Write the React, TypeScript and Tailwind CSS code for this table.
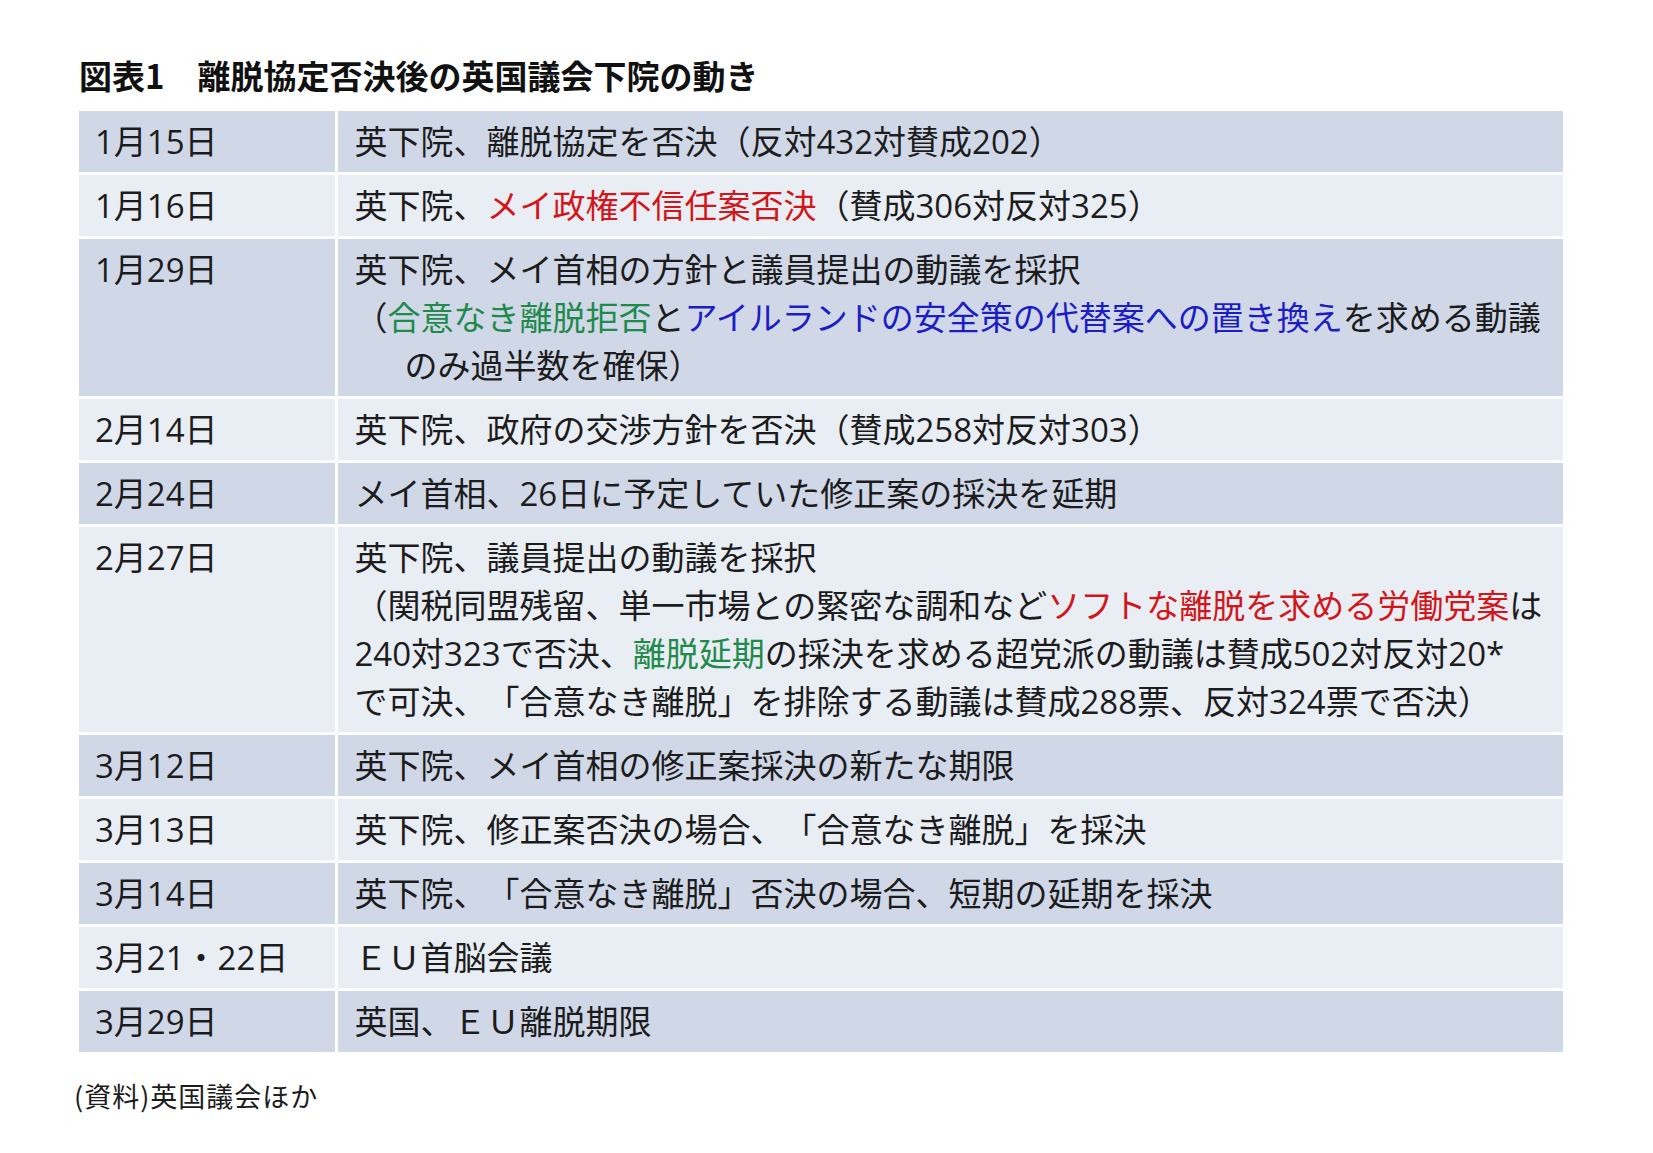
import React from "react";

const DARK = "bg-[#D0D8E8]";
const LIGHT = "bg-[#E9EDF4]";

const R = ({ children }: { children: React.ReactNode }) => (
  <span className="text-[#d0181c]">{children}</span>
);
const G = ({ children }: { children: React.ReactNode }) => (
  <span className="text-[#1f8a4c]">{children}</span>
);
const B = ({ children }: { children: React.ReactNode }) => (
  <span className="text-[#1d1dc4]">{children}</span>
);

type Row = { date: string; lines: React.ReactNode[]; dark: boolean };

const rows: Row[] = [
  { date: "1月15日", dark: true, lines: ["英下院、離脱協定を否決（反対432対賛成202）"] },
  {
    date: "1月16日",
    dark: false,
    lines: [
      <>
        英下院、<R>メイ政権不信任案否決</R>（賛成306対反対325）
      </>,
    ],
  },
  {
    date: "1月29日",
    dark: true,
    lines: [
      "英下院、メイ首相の方針と議員提出の動議を採択",
      <>
        （<G>合意なき離脱拒否</G>と<B>アイルランドの安全策の代替案への置き換え</B>を求める動議
      </>,
      <span className="pl-[50px]">のみ過半数を確保）</span>,
    ],
  },
  { date: "2月14日", dark: false, lines: ["英下院、政府の交渉方針を否決（賛成258対反対303）"] },
  { date: "2月24日", dark: true, lines: ["メイ首相、26日に予定していた修正案の採決を延期"] },
  {
    date: "2月27日",
    dark: false,
    lines: [
      "英下院、議員提出の動議を採択",
      <>
        （関税同盟残留、単一市場との緊密な調和など<R>ソフトな離脱を求める労働党案</R>は
      </>,
      <>
        240対323で否決、<G>離脱延期</G>の採決を求める超党派の動議は賛成502対反対20*
      </>,
      "で可決、「合意なき離脱」を排除する動議は賛成288票、反対324票で否決）",
    ],
  },
  { date: "3月12日", dark: true, lines: ["英下院、メイ首相の修正案採決の新たな期限"] },
  { date: "3月13日", dark: false, lines: ["英下院、修正案否決の場合、「合意なき離脱」を採決"] },
  { date: "3月14日", dark: true, lines: ["英下院、「合意なき離脱」否決の場合、短期の延期を採決"] },
  { date: "3月21・22日", dark: false, lines: ["ＥＵ首脳会議"] },
  { date: "3月29日", dark: true, lines: ["英国、ＥＵ離脱期限"] },
];

export default function App() {
  return (
    <div className="w-[1653px] h-[1153px] bg-white pl-[79px] pt-[55px] text-[#1c1c1c] [text-spacing-trim:space-all] font-['Open_Sans','Noto_Sans_CJK_JP',sans-serif]">
      <h1 className="text-[33px] leading-[40px] font-bold text-[#111] whitespace-nowrap font-['Noto_Sans_CJK_JP',sans-serif]">
        図表1　離脱協定否決後の英国議会下院の動き
      </h1>
      <div className="mt-[16px] w-[1484px] flex flex-col gap-[3px] text-[33px] leading-[48px]">
        {rows.map((r, i) => (
          <div key={i} className="flex gap-[3px]">
            <div className={`w-[256px] shrink-0 pl-[16px] py-[6.5px] whitespace-nowrap ${r.dark ? DARK : LIGHT}`}>
              {r.date}
            </div>
            <div className={`flex-1 pl-[16.5px] py-[6.5px] ${r.dark ? DARK : LIGHT}`}>
              {r.lines.map((l, j) => (
                <div key={j} className="whitespace-nowrap">
                  {l}
                </div>
              ))}
            </div>
          </div>
        ))}
      </div>
      <p className="mt-[26px] -ml-[5px] text-[27px] leading-[36px] tracking-[1px] text-[#1c1c1c] font-['Noto_Sans_CJK_JP',sans-serif]">
        (資料)英国議会ほか
      </p>
    </div>
  );
}
